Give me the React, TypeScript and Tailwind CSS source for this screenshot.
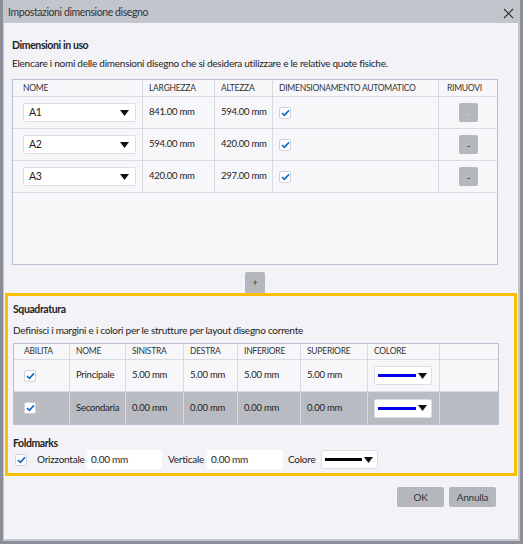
import React from "react"

const font = { fontFamily: 'Lato, "Noto Sans", sans-serif' }

function Check() {
  return (
    <span className="flex h-[12px] w-[12px] items-center justify-center rounded-[2px] border border-[#d0d3da] bg-white">
      <svg width="9" height="8" viewBox="0 0 9 8">
        <path d="M1 4.2 L3.4 6.4 L8 1.4" fill="none" stroke="#1565c0" strokeWidth="1.6" />
      </svg>
    </span>
  )
}

function Arrow() {
  return (
    <svg width="9" height="6" viewBox="0 0 9 6">
      <path d="M0 0 H9 L4.5 6 Z" fill="#111" />
    </svg>
  )
}

function SizeSelect({ value }: { value: string }) {
  return (
    <div className="flex h-[19px] w-[113px] items-center justify-between rounded-[2px] border border-[#dcdee4] bg-white pl-[5px] pr-[6px] text-[10.5px] text-[#222]">
      <span>{value}</span>
      <Arrow />
    </div>
  )
}

function ColorSelect({ color, w = 58 }: { color: string; w?: number }) {
  return (
    <div
      className="flex h-[19px] items-center rounded-[2px] border border-[#dcdee4] bg-white pl-[3px] pr-[4px]"
      style={{ width: w }}
    >
      <span className="mr-[2px] h-[3px] flex-1" style={{ background: color }} />
      <Arrow />
    </div>
  )
}

const sizes = [
  { name: "A1", w: "841.00 mm", h: "594.00 mm", dim: false },
  { name: "A2", w: "594.00 mm", h: "420.00 mm", dim: true },
  { name: "A3", w: "420.00 mm", h: "297.00 mm", dim: true },
]

const borders = [
  { name: "Principale", l: "5.00 mm", r: "5.00 mm", b: "5.00 mm", t: "5.00 mm", sel: false },
  { name: "Secondaria", l: "0.00 mm", r: "0.00 mm", b: "0.00 mm", t: "0.00 mm", sel: true },
]

const cols1 = "grid-cols-[130px_72px_58px_166px_58px]"
const cols2 = "grid-cols-[56px_56px_58px_54px_63px_67px_72px_58px]"
const cell = "flex items-center whitespace-nowrap border-r border-[#d8dbe2]"

export default function App() {
  return (
    <div
      className="flex h-[544px] w-[523px] flex-col border-x-[3px] border-b-[3px] border-[#8b8e98] bg-[#c3c5cd] text-[#222]"
      style={font}
    >
      <div className="flex h-[23px] shrink-0 items-center justify-between pl-[5px] pr-[6px] pt-[3px]">
        <span className="text-[10.5px] tracking-[-0.4px] text-[#333]">Impostazioni dimensione disegno</span>
        <svg width="11" height="11" viewBox="0 0 11 11">
          <path d="M1 1 L10 10 M10 1 L1 10" stroke="#333" strokeWidth="1.2" />
        </svg>
      </div>

      <div className="mb-[2px] ml-[1px] mr-[2px] flex flex-1 flex-col bg-[#f2f2f7] pt-[14px] tracking-[-0.25px]">
        <div className="px-[8px]">
          <div className="text-[10.5px] font-bold leading-[16px] tracking-[-0.4px]">Dimensioni in uso</div>
          <div className="mt-[2px] text-[10px] leading-[16px]">
            Elencare i nomi delle dimensioni disegno che si desidera utilizzare e le relative quote fisiche.
          </div>

          <div className="mt-[8px] h-[186px] w-[486px] border border-[#b6c2d2] bg-[#f7f7fa]">
            <div className={`grid ${cols1} h-[17px] border-b border-[#d8dbe2] text-[8.5px] text-[#333]`}>
              <div className={`${cell} pl-[10px]`}>NOME</div>
              <div className={`${cell} pl-[6px]`}>LARGHEZZA</div>
              <div className={`${cell} pl-[6px]`}>ALTEZZA</div>
              <div className={`${cell} pl-[6px]`}>DIMENSIONAMENTO AUTOMATICO</div>
              <div className="flex items-center pl-[8px]">RIMUOVI</div>
            </div>
            {sizes.map((s) => (
              <div key={s.name} className={`grid ${cols1} h-[32px] border-b border-[#d8dbe2] text-[9.5px]`}>
                <div className={`${cell} pl-[10px]`}>
                  <SizeSelect value={s.name} />
                </div>
                <div className={`${cell} pl-[6px]`}>{s.w}</div>
                <div className={`${cell} pl-[6px]`}>{s.h}</div>
                <div className={`${cell} pl-[6px]`}>
                  <Check />
                </div>
                <div className="flex items-center pl-[20px]">
                  <span
                    className={`flex h-[19px] w-[19px] items-center justify-center rounded-[2px] bg-[#b5b7bf] text-[10px] leading-none ${
                      s.dim ? "text-[#333]" : "text-[#d8d9de]"
                    }`}
                  >
                    -
                  </span>
                </div>
              </div>
            ))}
          </div>

          <div className="mt-[7px] flex justify-center pr-[12px]">
            <span className="flex h-[21px] w-[20px] items-center justify-center rounded-t-[2px] bg-[#b5b7bf] text-[9px] leading-none text-[#333]">
              +
            </span>
          </div>
        </div>

        <div className="mx-[1px] border-[3px] border-[#fcbf00] px-[5px] pb-[4px] pt-[5px]">
          <div className="text-[10.5px] font-bold leading-[16px] tracking-[-0.4px]">Squadratura</div>
          <div className="mt-[5px] text-[10px] leading-[16px]">
            Definisci i margini e i colori per le strutture per layout disegno corrente
          </div>

          <div className="mt-[5px] w-[486px] border border-[#b6c2d2] bg-[#f7f7fa]">
            <div className={`grid ${cols2} h-[16px] border-b border-[#d8dbe2] text-[8.5px] text-[#333]`}>
              {["ABILITA", "NOME", "SINISTRA", "DESTRA", "INFERIORE", "SUPERIORE", "COLORE", ""].map((h, i) => (
                <div
                  key={i}
                  className={`flex items-center whitespace-nowrap ${i < 7 ? "border-r border-[#d8dbe2]" : ""} ${
                    i === 0 ? "pl-[10px]" : "pl-[6px]"
                  }`}
                >
                  {h}
                </div>
              ))}
            </div>
            {borders.map((b) => (
              <div
                key={b.name}
                className={`grid ${cols2} h-[32px] text-[9.5px] ${b.sel ? "bg-[#b9bbc3]" : "border-b border-[#d8dbe2] bg-[#f7f7fa]"}`}
              >
                <div className={`${cell} pl-[10px]`}>
                  <Check />
                </div>
                <div className={`${cell} pl-[6px]`}>{b.name}</div>
                <div className={`${cell} pl-[6px]`}>{b.l}</div>
                <div className={`${cell} pl-[6px]`}>{b.r}</div>
                <div className={`${cell} pl-[6px]`}>{b.b}</div>
                <div className={`${cell} pl-[6px]`}>{b.t}</div>
                <div className={`${cell} pl-[6px]`}>
                  <ColorSelect color="#0000ee" />
                </div>
                <div />
              </div>
            ))}
          </div>

          <div className="mt-[11px] text-[10.5px] font-bold leading-[14px] tracking-[-0.4px]">Foldmarks</div>
          <div className="flex h-[19px] items-center text-[10px]">
            <span className="ml-[2px]">
              <Check />
            </span>
            <span className="ml-[10px] w-[46px]">Orizzontale</span>
            <span className="ml-[4px] flex h-[19px] w-[75px] items-center rounded-[2px] bg-white pl-[4px]">0.00 mm</span>
            <span className="ml-[6px] w-[34px]">Verticale</span>
            <span className="ml-[5px] flex h-[19px] w-[76px] items-center rounded-[2px] bg-white pl-[4px]">0.00 mm</span>
            <span className="ml-[5px] w-[28px]">Colore</span>
            <span className="ml-[5px]">
              <ColorSelect color="#000" w={57} />
            </span>
          </div>
        </div>

        <div className="mt-[11px] flex justify-end gap-[5px] pr-[22px]">
          <span className="flex h-[20px] w-[47px] items-center justify-center rounded-[2px] bg-[#b5b7bf] text-[10px] text-[#333]">
            OK
          </span>
          <span className="flex h-[20px] w-[47px] items-center justify-center rounded-[2px] bg-[#b5b7bf] text-[10px] text-[#333]">
            Annulla
          </span>
        </div>
      </div>
    </div>
  )
}
